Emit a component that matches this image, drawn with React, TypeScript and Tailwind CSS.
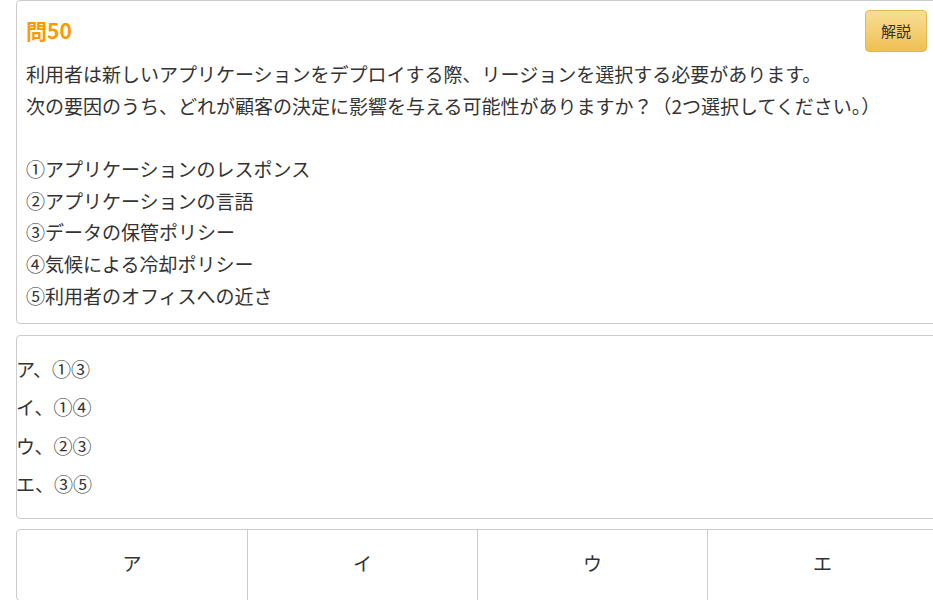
const statements = [
  '利用者は新しいアプリケーションをデプロイする際、リージョンを選択する必要があります。',
  '次の要因のうち、どれが顧客の決定に影響を与える可能性がありますか？（2つ選択してください。）',
  '',
  '①アプリケーションのレスポンス',
  '②アプリケーションの言語',
  '③データの保管ポリシー',
  '④気候による冷却ポリシー',
  '⑤利用者のオフィスへの近さ',
]

const choices = ['ア、①③', 'イ、①④', 'ウ、②③', 'エ、③⑤']
const answers = ['ア', 'イ', 'ウ', 'エ']

export default function App() {
  return (
    <div className="w-[933px] h-[600px] overflow-hidden bg-white text-[#333] font-['Noto_Sans_CJK_JP','Noto_Sans',sans-serif]">
      <div className="w-[922px] ml-4">
        {/* question */}
        <div className="border border-[#ccc] rounded-[4px] pl-[9px] pr-[10px] pt-[9px] pb-[11px]">
          <div className="flex items-start justify-between">
            <div className="pt-[6px] text-[21px] leading-[28px] font-bold text-[#ff9900]">問50</div>
            <button className="w-[62px] h-[42px] rounded-[4px] border border-[#e2b955] bg-gradient-to-b from-[#f9de92] to-[#efc052] text-[15px] text-[#333]">
              解説
            </button>
          </div>
          <div className="mt-[6px] text-[19px] leading-[31.7px]">
            {statements.map((s, i) => (
              <div key={i} className="h-[31.7px] whitespace-nowrap">{s}</div>
            ))}
          </div>
        </div>

        {/* choices */}
        <div className="mt-[11px] border border-[#ccc] rounded-[4px] pt-[14px] pb-[14px]">
          {choices.map(c => (
            <div key={c} className="text-[19px] leading-[38.5px] h-[38.5px] -ml-[1px]">{c}</div>
          ))}
        </div>

        {/* answer buttons */}
        <div className="mt-[10px] border border-[#ccc] rounded-[4px] grid grid-cols-4 h-[72px]">
          {answers.map((a, i) => (
            <div
              key={a}
              className={`flex items-center justify-center pb-[3px] text-[19px] ${i > 0 ? 'border-l border-[#ccc]' : ''}`}
            >
              {a}
            </div>
          ))}
        </div>
      </div>
    </div>
  )
}
